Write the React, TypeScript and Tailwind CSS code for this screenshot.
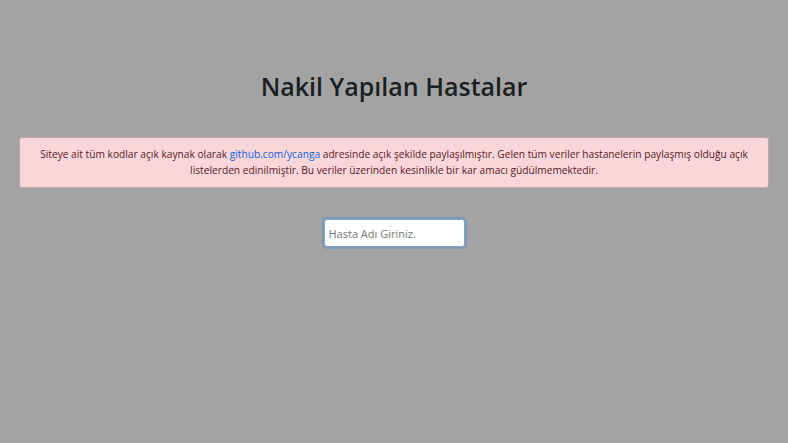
import React from "react";

export default function App() {
  return (
    <div className="min-h-[443px] w-full bg-[#a3a3a3] font-['Open_Sans',sans-serif]">
      <div className="px-[19px] pt-[66px]">
        <h1 className="text-center text-[25px] leading-[40px] font-semibold text-[#1c1f22]">
          Nakil Yapılan Hastalar
        </h1>
        <div className="mt-[31px] rounded-[3px] border border-[#bfa7a9] bg-[#f9d6d9] px-2 py-[9px] text-center text-[10.2px] leading-[15.5px] text-[#5a1a1f]">
          <div className="whitespace-nowrap">
            Siteye ait tüm kodlar açık kaynak olarak{" "}
            <a className="text-[#0a5fd6]">github.com/ycanga</a> adresinde açık şekilde paylaşılmıştır. Gelen tüm veriler hastanelerin paylaşmış olduğu açık
          </div>
          <div className="whitespace-nowrap">
            listelerden edinilmiştir. Bu veriler üzerinden kesinlikle bir kar amacı güdülmemektedir.
          </div>
        </div>
        <div className="mt-[31px] flex justify-center">
          <input
            className="h-[28px] w-[141px] rounded-[3px] border border-[#7fa6d0] bg-white px-[4px] text-[11px] text-[#333] shadow-[0_0_0_2px_rgba(88,140,200,0.45)] outline-none placeholder:text-[#777]"
            placeholder="Hasta Adı Giriniz."
            autoFocus
          />
        </div>
      </div>
    </div>
  );
}
